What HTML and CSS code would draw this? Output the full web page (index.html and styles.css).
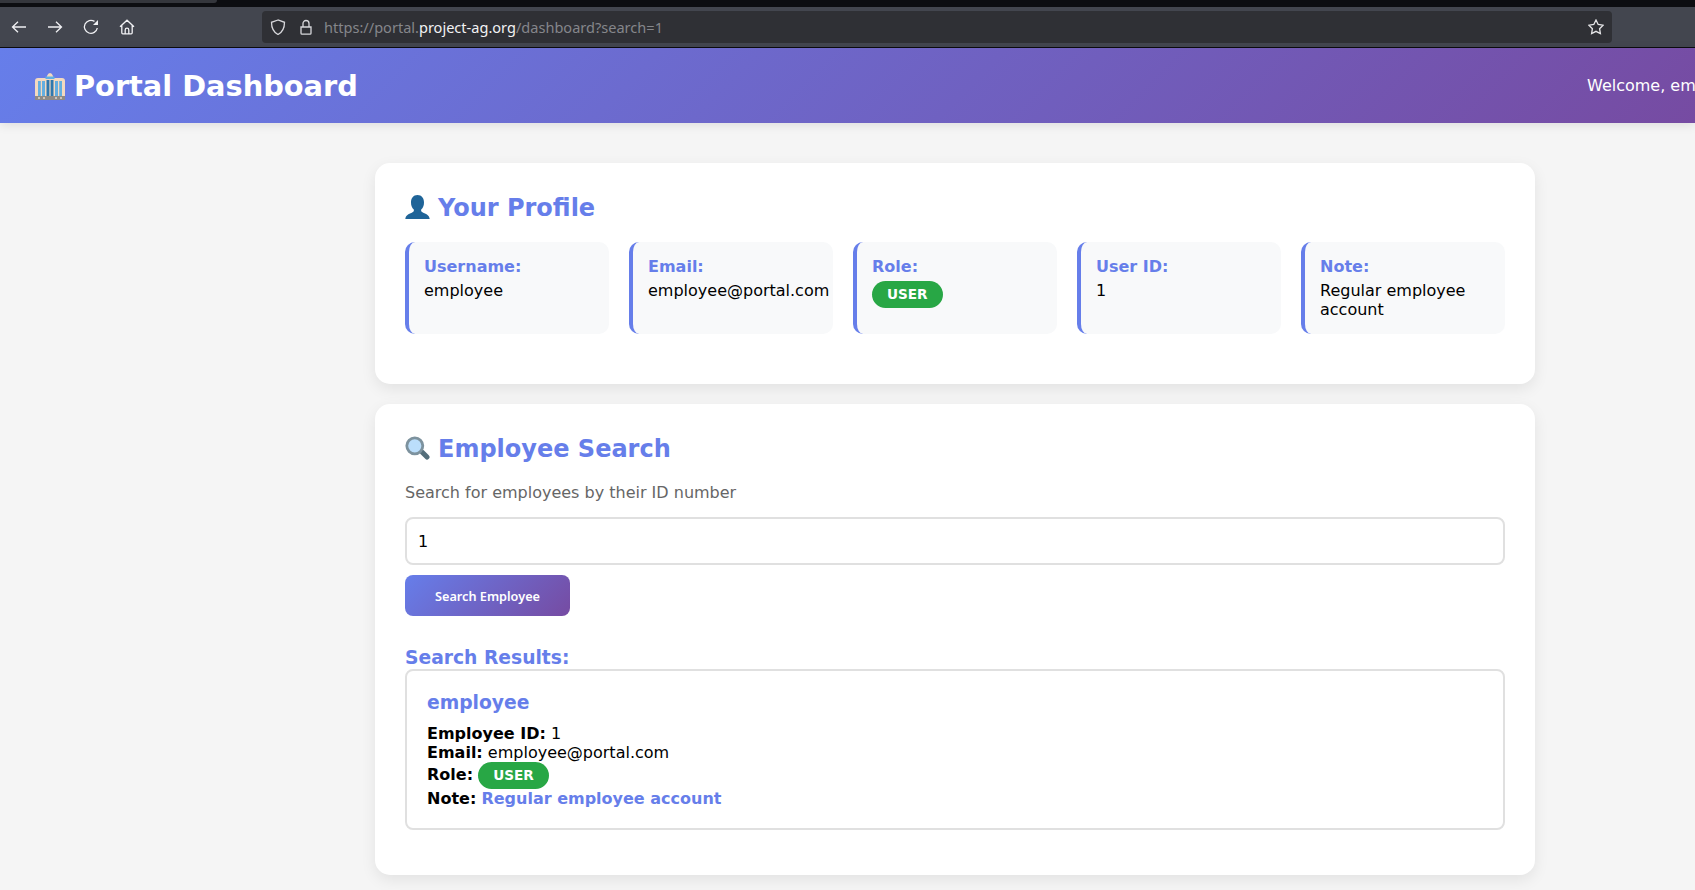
FILE: index.html
```html
<!DOCTYPE html>
<html lang="en">
<head>
<meta charset="utf-8">
<title>Portal Dashboard</title>
<link rel="stylesheet" href="styles.css">
</head>
<body>
<div class="tabstrip"><div class="tab-edge"></div></div>
<div class="toolbar">
  <div class="nav">
    <svg class="ico" viewBox="0 0 16 16"><path d="M15 8H1.500M7 2.800 1.500 8 7 13.200"/></svg>
    <svg class="ico" viewBox="0 0 16 16"><path d="M1 8h13.500M9 2.800 14.500 8 9 13.200"/></svg>
    <svg class="ico" viewBox="0 0 16 16"><path d="M14.300 9A6.500 6.500 0 1 1 11.500 2.400"/><path class="solid" d="M15 1v5h-5z"/></svg>
    <svg class="ico" viewBox="0 0 16 16"><path d="M1 7.800 8 1.200l7 6.600M2.800 6.500v7.300a1 1 0 0 0 1 1h8.400a1 1 0 0 0 1-1V6.500M6.200 14.800V11a1.800 1.800 0 0 1 3.600 0v3.800"/></svg>
  </div>
  <div class="urlbar">
    <svg class="ico shield" viewBox="0 0 16 16"><path d="M8 1 1.500 3.300C1.500 9 3 13 8 15.500 13 13 14.500 9 14.500 3.300z"/></svg>
    <svg class="ico lock" viewBox="0 0 16 16"><path d="M5 8V4.500a3 3 0 0 1 6 0V8M3 8h10v6.200a1 1 0 0 1-1 1H4a1 1 0 0 1-1-1z"/></svg>
    <span class="url">https://portal.<b>project-ag.org</b>/dashboard?search=1</span>
    <svg class="ico star" viewBox="0 0 16 16"><path d="M8 1l2.200 4.500 4.900.7-3.500 3.500.8 4.900L8 12.300l-4.400 2.300.8-4.900L.9 6.200l4.900-.7z"/></svg>
  </div>
</div>
<header class="app-header">
  <h1 class="brand">
    <svg class="brand-icon" viewBox="0 0 30 28" aria-hidden="true">
      <path fill="#f3d9c0" d="M0 28V9q0-3 3-3h8q1-1 1-2 1-3 3-3t3 3q0 1 1 2h8q3 0 3 3v19z"/>
      <path fill="#5fb0e5" d="M10.500 4.500h9V7h-9z"/>
      <path fill="#64aee0" d="M3 9h7v15H3zM20 9h7v15h-7z"/>
      <path fill="#2f78ae" d="M11.500 8h7v16h-7z"/>
      <path fill="#f3d9c0" d="M5.800 9h1.200v15H5.800zM23 9h1.200v15H23zM14.400 8h1.200v16h-1.200z"/>
      <path fill="#8d8a86" d="M0 24h30v4H0z"/>
      <path fill="#c9c3bb" d="M3 25h2v2H3zM8 25h2v2H8zM20 25h2v2h-2zM25 25h2v2h-2z"/>
    </svg>
    <span>Portal Dashboard</span>
  </h1>
  <div class="welcome">Welcome, employee</div>
</header>
<main class="container">
  <section class="card">
    <h2>
      <svg class="h-icon" viewBox="0 0 25 24" aria-hidden="true"><path fill="#1f6498" d="M12.500 0C8.300 0 6 3.200 6 7.500c0 3 1 5.500 2.800 7 .4 1.500-.3 2.500-2 3.200C3.500 19 .8 20 .3 24h24.400c-.5-4-3.200-5-6.500-6.300-1.700-.7-2.400-1.700-2-3.200C18 13 19 10.500 19 7.500 19 3.200 16.700 0 12.500 0z"/></svg>
      <span>Your Profile</span>
    </h2>
    <div class="info-grid">
      <div class="info-item"><span class="label">Username:</span>employee</div>
      <div class="info-item"><span class="label">Email:</span>employee@portal.com</div>
      <div class="info-item"><span class="label">Role:</span><span class="badge">USER</span></div>
      <div class="info-item"><span class="label">User ID:</span>1</div>
      <div class="info-item"><span class="label">Note:</span>Regular employee account</div>
    </div>
  </section>
  <section class="card">
    <h2>
      <svg class="h-icon" viewBox="0 0 25 24" aria-hidden="true"><path stroke="#546e7a" stroke-width="5" stroke-linecap="round" d="M17.500 16.500 22 21"/><circle cx="9.800" cy="9.800" r="8" fill="#bbdefb" stroke="#7d929e" stroke-width="2.800"/></svg>
      <span>Employee Search</span>
    </h2>
    <p class="hint">Search for employees by their ID number</p>
    <input class="search-input" type="text" value="1">
    <button class="search-btn" type="button">Search Employee</button>
    <h3 class="results-title">Search Results:</h3>
    <div class="result">
      <h4>employee</h4>
      <div class="row"><strong>Employee ID:</strong> 1</div>
      <div class="row"><strong>Email:</strong> employee@portal.com</div>
      <div class="row role-row"><strong>Role:</strong> <span class="badge">USER</span></div>
      <div class="row"><strong>Note:</strong> <a class="note-link" href="#">Regular employee account</a></div>
    </div>
  </section>
</main>
</body>
</html>
```
FILE: styles.css
```css
* { box-sizing: border-box; }
html, body { margin: 0; height: 890px; overflow: hidden; }
body { background: #f5f5f5; font-family: "DejaVu Sans", sans-serif; font-size: 16px; line-height: 19px; color: #000; }

.tabstrip { height: 7px; background: #0c0d11; }
.tab-edge { width: 217px; height: 3px; background: #34363c; border-bottom-right-radius: 3px; }
.toolbar { height: 41px; background: #43464f; border-bottom: 1px solid #0c0c0f; display: flex; align-items: center; }
.nav { width: 262px; display: flex; gap: 20px; padding-left: 11px; flex: none; }
.ico { width: 16px; height: 16px; fill: none; stroke: #f0f0f3; stroke-width: 1.300; flex: none; }
.ico .solid { fill: #f0f0f3; stroke: none; }
.urlbar { width: 1350px; height: 32px; background: #2f3035; border-radius: 4px; display: flex; align-items: center; padding: 0 8px; }
.shield, .lock { stroke: #d8d8dc; }
.lock { margin-left: 12px; }
.url { margin-left: 10px; flex: 1; font-family: "Noto Sans", sans-serif; font-size: 14.550px; color: #85868b; }
.url b { font-weight: 400; color: #f2f2f4; }
.star { stroke: #e6e6e8; }

.app-header { height: 75px; background: linear-gradient(135deg, #667eea 0%, #764ba2 100%); color: #fff; display: flex; align-items: center; padding-left: 35px; box-shadow: 0 2px 10px rgba(0,0,0,.1); }
.brand { margin: 0; flex: none; width: 1552px; display: flex; align-items: center; gap: 9px; font-size: 28.800px; line-height: 34px; font-weight: 700; }
.brand-icon { width: 30px; height: 28px; flex: none; }
.welcome { flex: none; white-space: nowrap; }

.container { width: 1160px; margin: 40px 0 0 375px; }
.card { background: #fff; border-radius: 15px; padding: 30px; margin-bottom: 20px; box-shadow: 0 5px 15px rgba(0,0,0,.08); }
h2 { margin: 0 0 20px; padding-top: 1px; display: flex; align-items: center; gap: 8px; font-size: 24px; line-height: 28px; color: #667eea; font-weight: 700; }
.h-icon { width: 25px; height: 24px; flex: none; margin-top: -2px; }

.info-grid { display: grid; grid-template-columns: repeat(5, minmax(0, 1fr)); gap: 20px; margin-bottom: 20px; }
.info-item { background: #f8f9fa; border-left: 4px solid #667eea; border-radius: 10px; padding: 15px 0 15px 15px; min-height: 92px; }
.label { display: block; font-weight: 700; color: #667eea; margin-bottom: 5px; }
.badge { display: inline-block; background: #28a745; color: #fff; font-size: 13.600px; font-weight: 700; line-height: 17px; padding: 5px 15px; border-radius: 20px; vertical-align: middle; }
.info-item .badge { display: block; width: 71px; }

.hint { margin: 0 0 15px; color: #666; }
.search-input { display: block; width: 100%; height: 48px; border: 2px solid #e0e0e0; border-radius: 8px; padding: 0 11px; font: 16px "DejaVu Sans", sans-serif; color: #000; background: #fff; margin-bottom: 10px; }
.search-btn { display: block; width: 165px; height: 41px; border: 0; border-radius: 8px; background: linear-gradient(135deg, #667eea 0%, #764ba2 100%); color: #fff; font: 600 12.700px "Noto Sans", sans-serif; padding: 0; }
.results-title { margin: 31px 0 0; font-size: 18.720px; line-height: 22px; color: #667eea; font-weight: 700; }
.result { border: 2px solid #e0e0e0; border-radius: 8px; padding: 20px; height: 161px; margin-bottom: 15px; }
.result h4 { margin: 0 0 10px; font-size: 18.720px; line-height: 23px; color: #667eea; font-weight: 700; }
.row { line-height: 19px; }
.role-row { line-height: 26px; margin-bottom: 1px; }
.role-row .badge { margin: -1px 0; }
.note-link { color: #667eea; font-weight: 700; text-decoration: none; }
```
